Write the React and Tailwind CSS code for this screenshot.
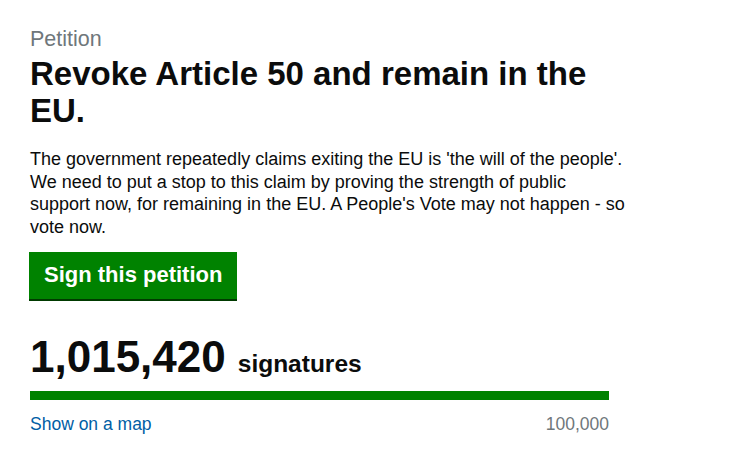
import React from 'react';

const App = () => {
  return (
    <div className="min-h-screen bg-white text-[#0b0c0c] font-['Liberation_Sans',Arial,sans-serif]">
      <div className="pl-[30px] pt-[26px] w-[626px]">
        {/* Header */}
        <div className="text-[21.5px] leading-[26px] text-[#6f777b]">Petition</div>
        <h1 className="mt-[3px] text-[33px] leading-[37px] font-bold">
          Revoke Article 50 and remain in the EU.
        </h1>

        {/* Description */}
        <p className="mt-[19px] text-[18px] leading-[22.7px]">
          The government repeatedly claims exiting the EU is 'the will of the people'. We need
          to put a stop to this claim by proving the strength of public support now, for
          remaining in the EU. A People's Vote may not happen - so vote now.
        </p>

        <button className="-ml-px mt-[13px] h-[47px] px-[15px] bg-[#008200] text-white text-[22px] font-bold leading-none shadow-[0_2px_0_#003a00]">
          Sign this petition
        </button>

        {/* Signature count */}
        <div className="mt-[36px] flex items-baseline gap-[12px]">
          <span className="text-[44px] leading-[44px] font-bold">1,015,420</span>
          <span className="text-[24.5px] font-bold">signatures</span>
        </div>

        <div className="mt-[8px] w-[579px] h-[9px] bg-[#008200]" />

        <div className="mt-[13px] w-[579px] flex justify-between text-[17.5px] leading-[22px]">
          <a href="#" className="text-[#005ea5]">Show on a map</a>
          <span className="text-[#6f777b]">100,000</span>
        </div>
      </div>
    </div>
  );
};

export default App;
